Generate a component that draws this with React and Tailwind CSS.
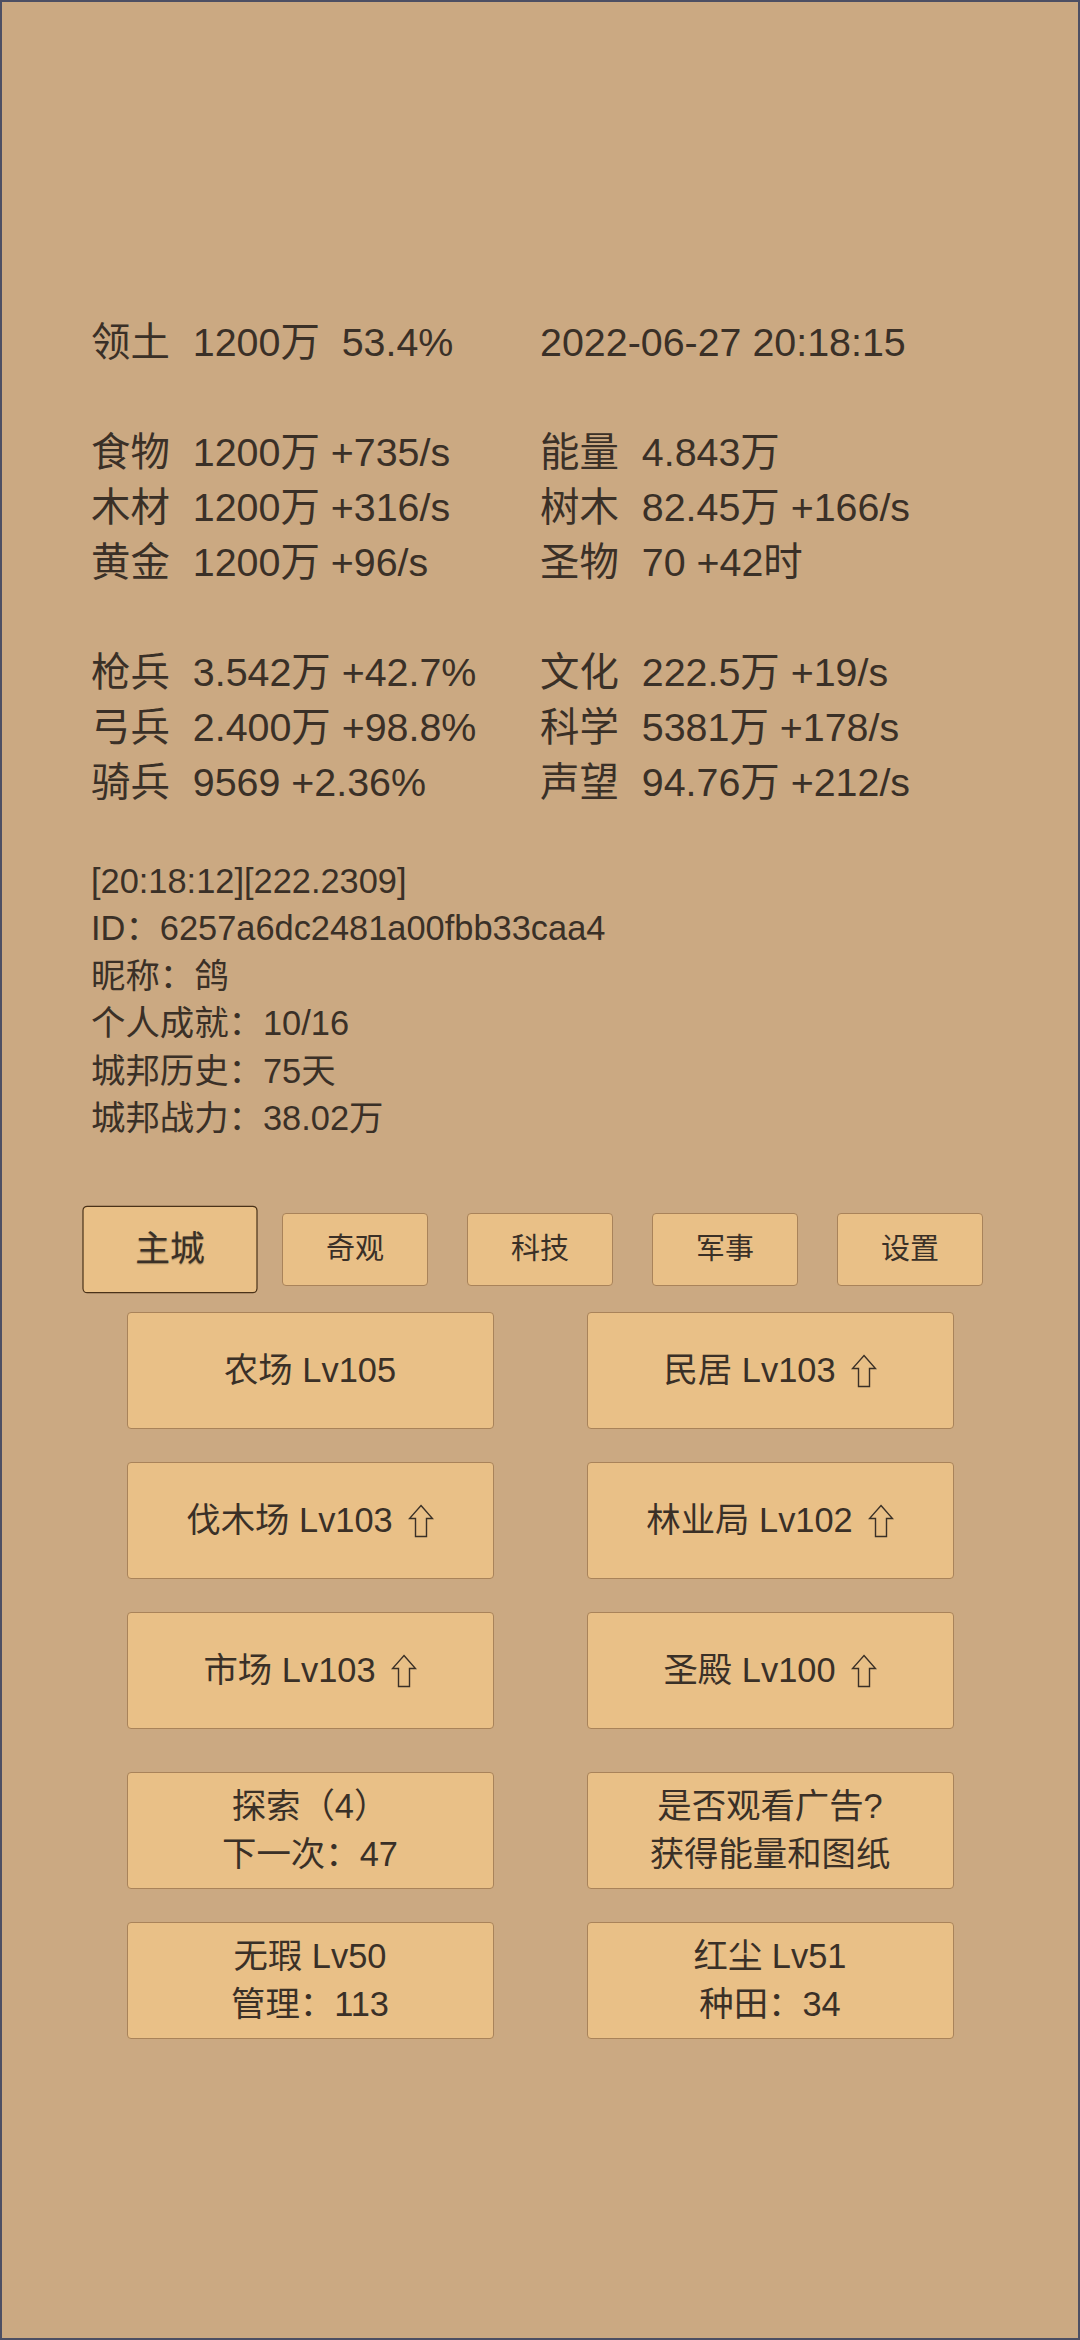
import React from 'react';

const stats = [
  [['领土', '1200万  53.4%'], [null, '2022-06-27 20:18:15']],
  null,
  [['食物', '1200万 +735/s'], ['能量', '4.843万']],
  [['木材', '1200万 +316/s'], ['树木', '82.45万 +166/s']],
  [['黄金', '1200万 +96/s'], ['圣物', '70 +42时']],
  null,
  [['枪兵', '3.542万 +42.7%'], ['文化', '222.5万 +19/s']],
  [['弓兵', '2.400万 +98.8%'], ['科学', '5381万 +178/s']],
  [['骑兵', '9569 +2.36%'], ['声望', '94.76万 +212/s']],
];

const info = [
  '[20:18:12][222.2309]',
  'ID：6257a6dc2481a00fbb33caa4',
  '昵称：鸽',
  '个人成就：10/16',
  '城邦历史：75天',
  '城邦战力：38.02万',
];

const tabs = ['主城', '奇观', '科技', '军事', '设置'];

const buildings = [
  ['农场 Lv105', false],
  ['民居 Lv103', true],
  ['伐木场 Lv103', true],
  ['林业局 Lv102', true],
  ['市场 Lv103', true],
  ['圣殿 Lv100', true],
];

const extras = [
  ['探索（4）', '下一次：47'],
  ['是否观看广告?', '获得能量和图纸'],
  ['无瑕 Lv50', '管理：113'],
  ['红尘 Lv51', '种田：34'],
];

function Cell({ cell }) {
  if (!cell) return <div />;
  const [label, value] = cell;
  return (
    <div className="flex whitespace-pre">
      {label && <span className="mr-[23px]">{label}</span>}
      <span>{value}</span>
    </div>
  );
}

function UpArrow() {
  return (
    <svg width="26" height="34" viewBox="0 0 26 34" className="ml-[15px]">
      <path
        d="M13 1.5 L24.5 14.5 L18.5 14.5 L18.5 32.5 L7.5 32.5 L7.5 14.5 L1.5 14.5 Z"
        fill="none"
        stroke="#3a3027"
        strokeWidth="1.4"
        strokeLinejoin="miter"
      />
    </svg>
  );
}

function Btn({ children }) {
  return (
    <div className="h-[117px] flex flex-col items-center justify-center rounded-[4px] border border-[#a9835a] bg-[#e9c087] text-[34.4px] leading-[47.5px]">
      {children}
    </div>
  );
}

export default function App() {
  return (
    <div
      className="w-[1080px] h-[2340px] border-2 border-[#4d4f63] bg-[#cba982] text-[#3a3027] overflow-hidden"
      style={{ fontFamily: '"Liberation Sans", "Noto Sans CJK SC", sans-serif' }}
    >
      <div className="pt-[313px] pl-[89px] text-[39.4px] leading-[55px]">
        {stats.map((row, i) =>
          row ? (
            <div key={i} className="grid grid-cols-[449px_1fr]">
              <Cell cell={row[0]} />
              <Cell cell={row[1]} />
            </div>
          ) : (
            <div key={i} className="h-[55px]" />
          )
        )}
      </div>

      <div className="mt-[48px] pl-[89px] text-[34.4px] leading-[47.4px]">
        {info.map((t, i) => (
          <div key={i}>{t}</div>
        ))}
      </div>

      <div className="mt-[71px] flex justify-center gap-[39px]">
        {tabs.map((t, i) => (
          <div
            key={t}
            className={
              i === 0
                ? 'w-[146px] h-[73px] flex items-center justify-center rounded-[4px] border border-[#4a3219] bg-[#e9c087] text-[29px] scale-[1.2] [text-shadow:0_1px_1px_rgba(0,0,0,0.35)]'
                : 'w-[146px] h-[73px] flex items-center justify-center rounded-[4px] border border-[#a9835a] bg-[#e9c087] text-[29px]'
            }
          >
            {t}
          </div>
        ))}
      </div>

      <div className="mt-[26px] mx-auto w-[827px] grid grid-cols-2 gap-x-[93px] gap-y-[33px]">
        {buildings.map(([name, up]) => (
          <Btn key={name}>
            <div className="flex items-center">
              <span>{name}</span>
              {up && <UpArrow />}
            </div>
          </Btn>
        ))}
      </div>

      <div className="mt-[43px] mx-auto w-[827px] grid grid-cols-2 gap-x-[93px] gap-y-[33px]">
        {extras.map(([a, b]) => (
          <Btn key={a}>
            <div>{a}</div>
            <div>{b}</div>
          </Btn>
        ))}
      </div>
    </div>
  );
}
